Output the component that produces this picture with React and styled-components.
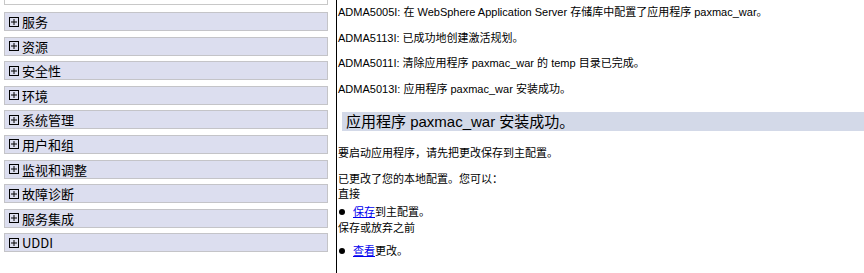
import React from "react";
import styled, { createGlobalStyle } from "styled-components";

const GlobalStyle = createGlobalStyle`
  html, body {
    margin: 0;
    padding: 0;
    background: #fff;
  }
  body {
    font-family: "Liberation Sans", "Noto Sans CJK SC", sans-serif;
    font-size: 11px;
    color: #000;
  }
`;

const Page = styled.div`
  display: flex;
  flex-direction: row;
  width: 864px;
  height: 273px;
  overflow: hidden;
`;

const NavPanel = styled.div`
  width: 336px;
  flex: none;
  box-sizing: border-box;
  padding-left: 4px;
  padding-right: 8px;
`;

const TopBox = styled.div`
  height: 4px;
  background: #fff;
  border: 1px solid #c8c8c8;
  border-top: none;
  margin-bottom: 7px;
`;

const NavItem = styled.div`
  display: flex;
  align-items: center;
  height: 19px;
  box-sizing: border-box;
  margin-bottom: 5.6px;
  background: #dcdeef;
  border: 1px solid #c4c4c8;
  padding-left: 4px;
  font-family: "Noto Sans CJK SC", "Liberation Sans", sans-serif;
  font-size: 13px;
  line-height: 17px;
  color: #000;
  span {
    margin-left: 3px;
  }
`;

const Content = styled.div`
  flex: 1;
  border-left: 1px solid #000;
  padding-left: 1px;
  padding-top: 5px;
  font-family: "Liberation Sans", "Noto Sans CJK SC", sans-serif;
  font-size: 11px;
`;

const Message = styled.p`
  margin: 0 0 10.5px 0;
  line-height: 15px;
  white-space: nowrap;
`;

const Title = styled.h2`
  margin: 15.5px 0 0 4px;
  height: 19px;
  background: #d3d9e8;
  font-weight: normal;
  font-size: 15px;
  line-height: 19px;
  padding-left: 4px;
  white-space: nowrap;
`;

const Line = styled.div`
  line-height: 15px;
  margin-top: ${(p) => p.$gap || 0}px;
  white-space: nowrap;
`;

const Bullet = styled.div`
  display: flex;
  align-items: center;
  line-height: 15px;
  margin-top: ${(p) => p.$gap || 0}px;
  &::before {
    content: "";
    width: 6px;
    height: 6px;
    border-radius: 50%;
    background: #000;
    margin-left: 1px;
    margin-right: 8px;
  }
  a {
    color: #0000ee;
    text-decoration: underline;
  }
`;

function PlusBox() {
  return (
    <svg width="10" height="10" viewBox="0 0 10 10">
      <rect x="0.5" y="0.5" width="9" height="9" fill="none" stroke="#000" />
      <line x1="2" y1="5" x2="8" y2="5" stroke="#000" />
      <line x1="5" y1="2" x2="5" y2="8" stroke="#000" />
    </svg>
  );
}

const navItems = [
  "服务",
  "资源",
  "安全性",
  "环境",
  "系统管理",
  "用户和组",
  "监视和调整",
  "故障诊断",
  "服务集成",
  "UDDI",
];

export default function App() {
  return (
    <>
      <GlobalStyle />
      <Page>
        <NavPanel>
          <TopBox />
          {navItems.map((t) => (
            <NavItem key={t}>
              <PlusBox />
              <span>{t}</span>
            </NavItem>
          ))}
        </NavPanel>
        <Content>
          <Message>ADMA5005I: 在 WebSphere Application Server 存储库中配置了应用程序 paxmac_war。</Message>
          <Message>ADMA5113I: 已成功地创建激活规划。</Message>
          <Message>ADMA5011I: 清除应用程序 paxmac_war 的 temp 目录已完成。</Message>
          <Message>ADMA5013I: 应用程序 paxmac_war 安装成功。</Message>
          <Title>应用程序 paxmac_war 安装成功。</Title>
          <Line $gap={14.5}>要启动应用程序，请先把更改保存到主配置。</Line>
          <Line $gap={11}>已更改了您的本地配置。您可以：</Line>
          <Line>直接</Line>
          <Bullet $gap={3}>
            <a href="#">保存</a>到主配置。
          </Bullet>
          <Line $gap={1}>保存或放弃之前</Line>
          <Bullet $gap={8}>
            <a href="#">查看</a>更改。
          </Bullet>
        </Content>
      </Page>
    </>
  );
}
